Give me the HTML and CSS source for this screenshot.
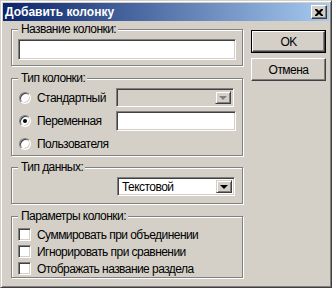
FILE: index.html
```html
<!DOCTYPE html>
<html lang="ru">
<head>
    <meta charset="UTF-8">
    <title>Добавить колонку</title>
    <link rel="stylesheet" href="styles.css">
</head>
<body>
    <div class="window">
        <div class="titlebar">
            <span class="title">Добавить колонку</span>
            <span class="close">
                <svg width="8" height="7" viewBox="0 0 8 7"><path d="M0 0h2l2 2 2-2h2v1L5.5 3.5 8 6v1H6L4 5 2 7H0V6l2.5-2.5L0 1z" fill="#000"/></svg>
            </span>
        </div>
        <div class="content">
            <div class="groups">
                <fieldset class="group g-name">
                    <legend>Название колонки:</legend>
                    <div class="field name-field"></div>
                </fieldset>

                <fieldset class="group g-type">
                    <legend>Тип колонки:</legend>
                    <div class="row">
                        <span class="radio"></span>
                        <span class="label">Стандартный</span>
                        <div class="combo disabled std-combo">
                            <span class="combo-text"></span>
                            <span class="drop"><i class="arrow grey"></i></span>
                        </div>
                    </div>
                    <div class="row">
                        <span class="radio checked"></span>
                        <span class="label">Переменная</span>
                        <div class="field var-field"></div>
                    </div>
                    <div class="row">
                        <span class="radio"></span>
                        <span class="label">Пользователя</span>
                    </div>
                </fieldset>

                <fieldset class="group g-data">
                    <legend>Тип данных:</legend>
                    <div class="combo data-combo">
                        <span class="combo-text">Текстовой</span>
                        <span class="drop"><i class="arrow"></i></span>
                    </div>
                </fieldset>

                <fieldset class="group g-params">
                    <legend>Параметры колонки:</legend>
                    <div class="check-row"><span class="checkbox"></span><span class="label">Суммировать при объединении</span></div>
                    <div class="check-row"><span class="checkbox"></span><span class="label">Игнорировать при сравнении</span></div>
                    <div class="check-row"><span class="checkbox"></span><span class="label">Отображать название раздела</span></div>
                </fieldset>
            </div>

            <div class="buttons">
                <div class="btn default"><span>OK</span></div>
                <div class="btn"><span>Отмена</span></div>
            </div>
        </div>
    </div>
</body>
</html>
```

FILE: styles.css
```css
body { margin: 0; font-family: "Liberation Sans", Arial, sans-serif; font-size: 12px; letter-spacing: -0.55px; color: #000; }

/* window frame */
.window { width: 332px; height: 288px; box-sizing: border-box; background: #d4d0c8; border: 1px solid; border-color: #d4d0c8 #404040 #404040 #d4d0c8; box-shadow: inset 1px 1px #fff, inset -1px -1px #808080; padding: 2px; }
.titlebar { height: 18px; display: flex; align-items: center; justify-content: space-between; padding: 0 2px; background: linear-gradient(to right, #0a246a, #a6caf0); }
.title { color: #fff; font-weight: bold; font-size: 12px; line-height: 18px; letter-spacing: 0; }
.close { width: 16px; height: 14px; box-sizing: border-box; display: flex; align-items: center; justify-content: center; background: #d4d0c8; border: 1px solid; border-color: #fff #404040 #404040 #fff; box-shadow: inset -1px -1px #808080; }

.content { display: flex; gap: 8px; padding: 1px 3px 0 8px; }

/* group boxes */
.groups { width: 232px; display: flex; flex-direction: column; gap: 5px; }
.group { margin: 0; padding: 0 6px; border: 1px solid #808080; box-shadow: 1px 1px #fff, inset 1px 1px #fff; }
.group legend { margin: 0; padding: 0 2px 0 3px; line-height: 14px; background: #d4d0c8; }
.g-name { padding-top: 3px; padding-bottom: 5px; }
.g-type { padding-top: 1px; }
.g-data { margin-top: -1px; padding-top: 3px; padding-bottom: 7px; display: flex; justify-content: flex-end; }
.g-params { padding-top: 3px; }

/* sunken controls */
.field, .combo, .radio, .checkbox { box-sizing: border-box; border: 1px solid; border-color: #808080 #fff #fff #808080; box-shadow: inset 1px 1px #404040, inset -1px -1px #d4d0c8; background: #fff; }
.name-field { height: 21px; }
.var-field { width: 120px; height: 20px; margin-left: auto; }

.row { height: 23px; display: flex; align-items: center; }
.label { white-space: nowrap; }
.radio { width: 12px; height: 12px; border-radius: 50%; margin: 0 6px 0 1px; position: relative; flex: none; }
.radio.checked::after { content: ""; position: absolute; left: 3px; top: 3px; width: 4px; height: 4px; border-radius: 50%; background: #000; }

.combo { display: flex; align-items: stretch; width: 118px; height: 19px; padding: 2px; }
.combo.disabled { background: #d4d0c8; }
.std-combo { margin-left: auto; margin-right: 2px; }
.data-combo { margin-right: 1px; }
.combo-text { flex: 1; line-height: 15px; padding-left: 2px; }
.drop { width: 16px; box-sizing: border-box; display: flex; align-items: center; justify-content: center; background: #d4d0c8; border: 1px solid; border-color: #d4d0c8 #404040 #404040 #d4d0c8; box-shadow: inset 1px 1px #fff, inset -1px -1px #808080; }
.arrow { width: 0; height: 0; border-left: 4px solid transparent; border-right: 4px solid transparent; border-top: 4px solid #000; }
.arrow.grey { border-top-color: #808080; }

.check-row { height: 17px; display: flex; align-items: center; }
.checkbox { width: 13px; height: 13px; margin-right: 6px; flex: none; }

/* buttons */
.buttons { width: 75px; display: flex; flex-direction: column; gap: 5px; padding-top: 8px; }
.btn { height: 23px; box-sizing: border-box; display: flex; align-items: center; justify-content: center; border: 1px solid; border-color: #fff #404040 #404040 #fff; box-shadow: inset -1px -1px #808080; }
.btn.default { border: 1px solid #000; }
.btn.default span { align-self: stretch; flex: 1; display: flex; align-items: center; justify-content: center; border: 1px solid; border-color: #fff #404040 #404040 #fff; box-shadow: inset -1px -1px #808080; }
```
